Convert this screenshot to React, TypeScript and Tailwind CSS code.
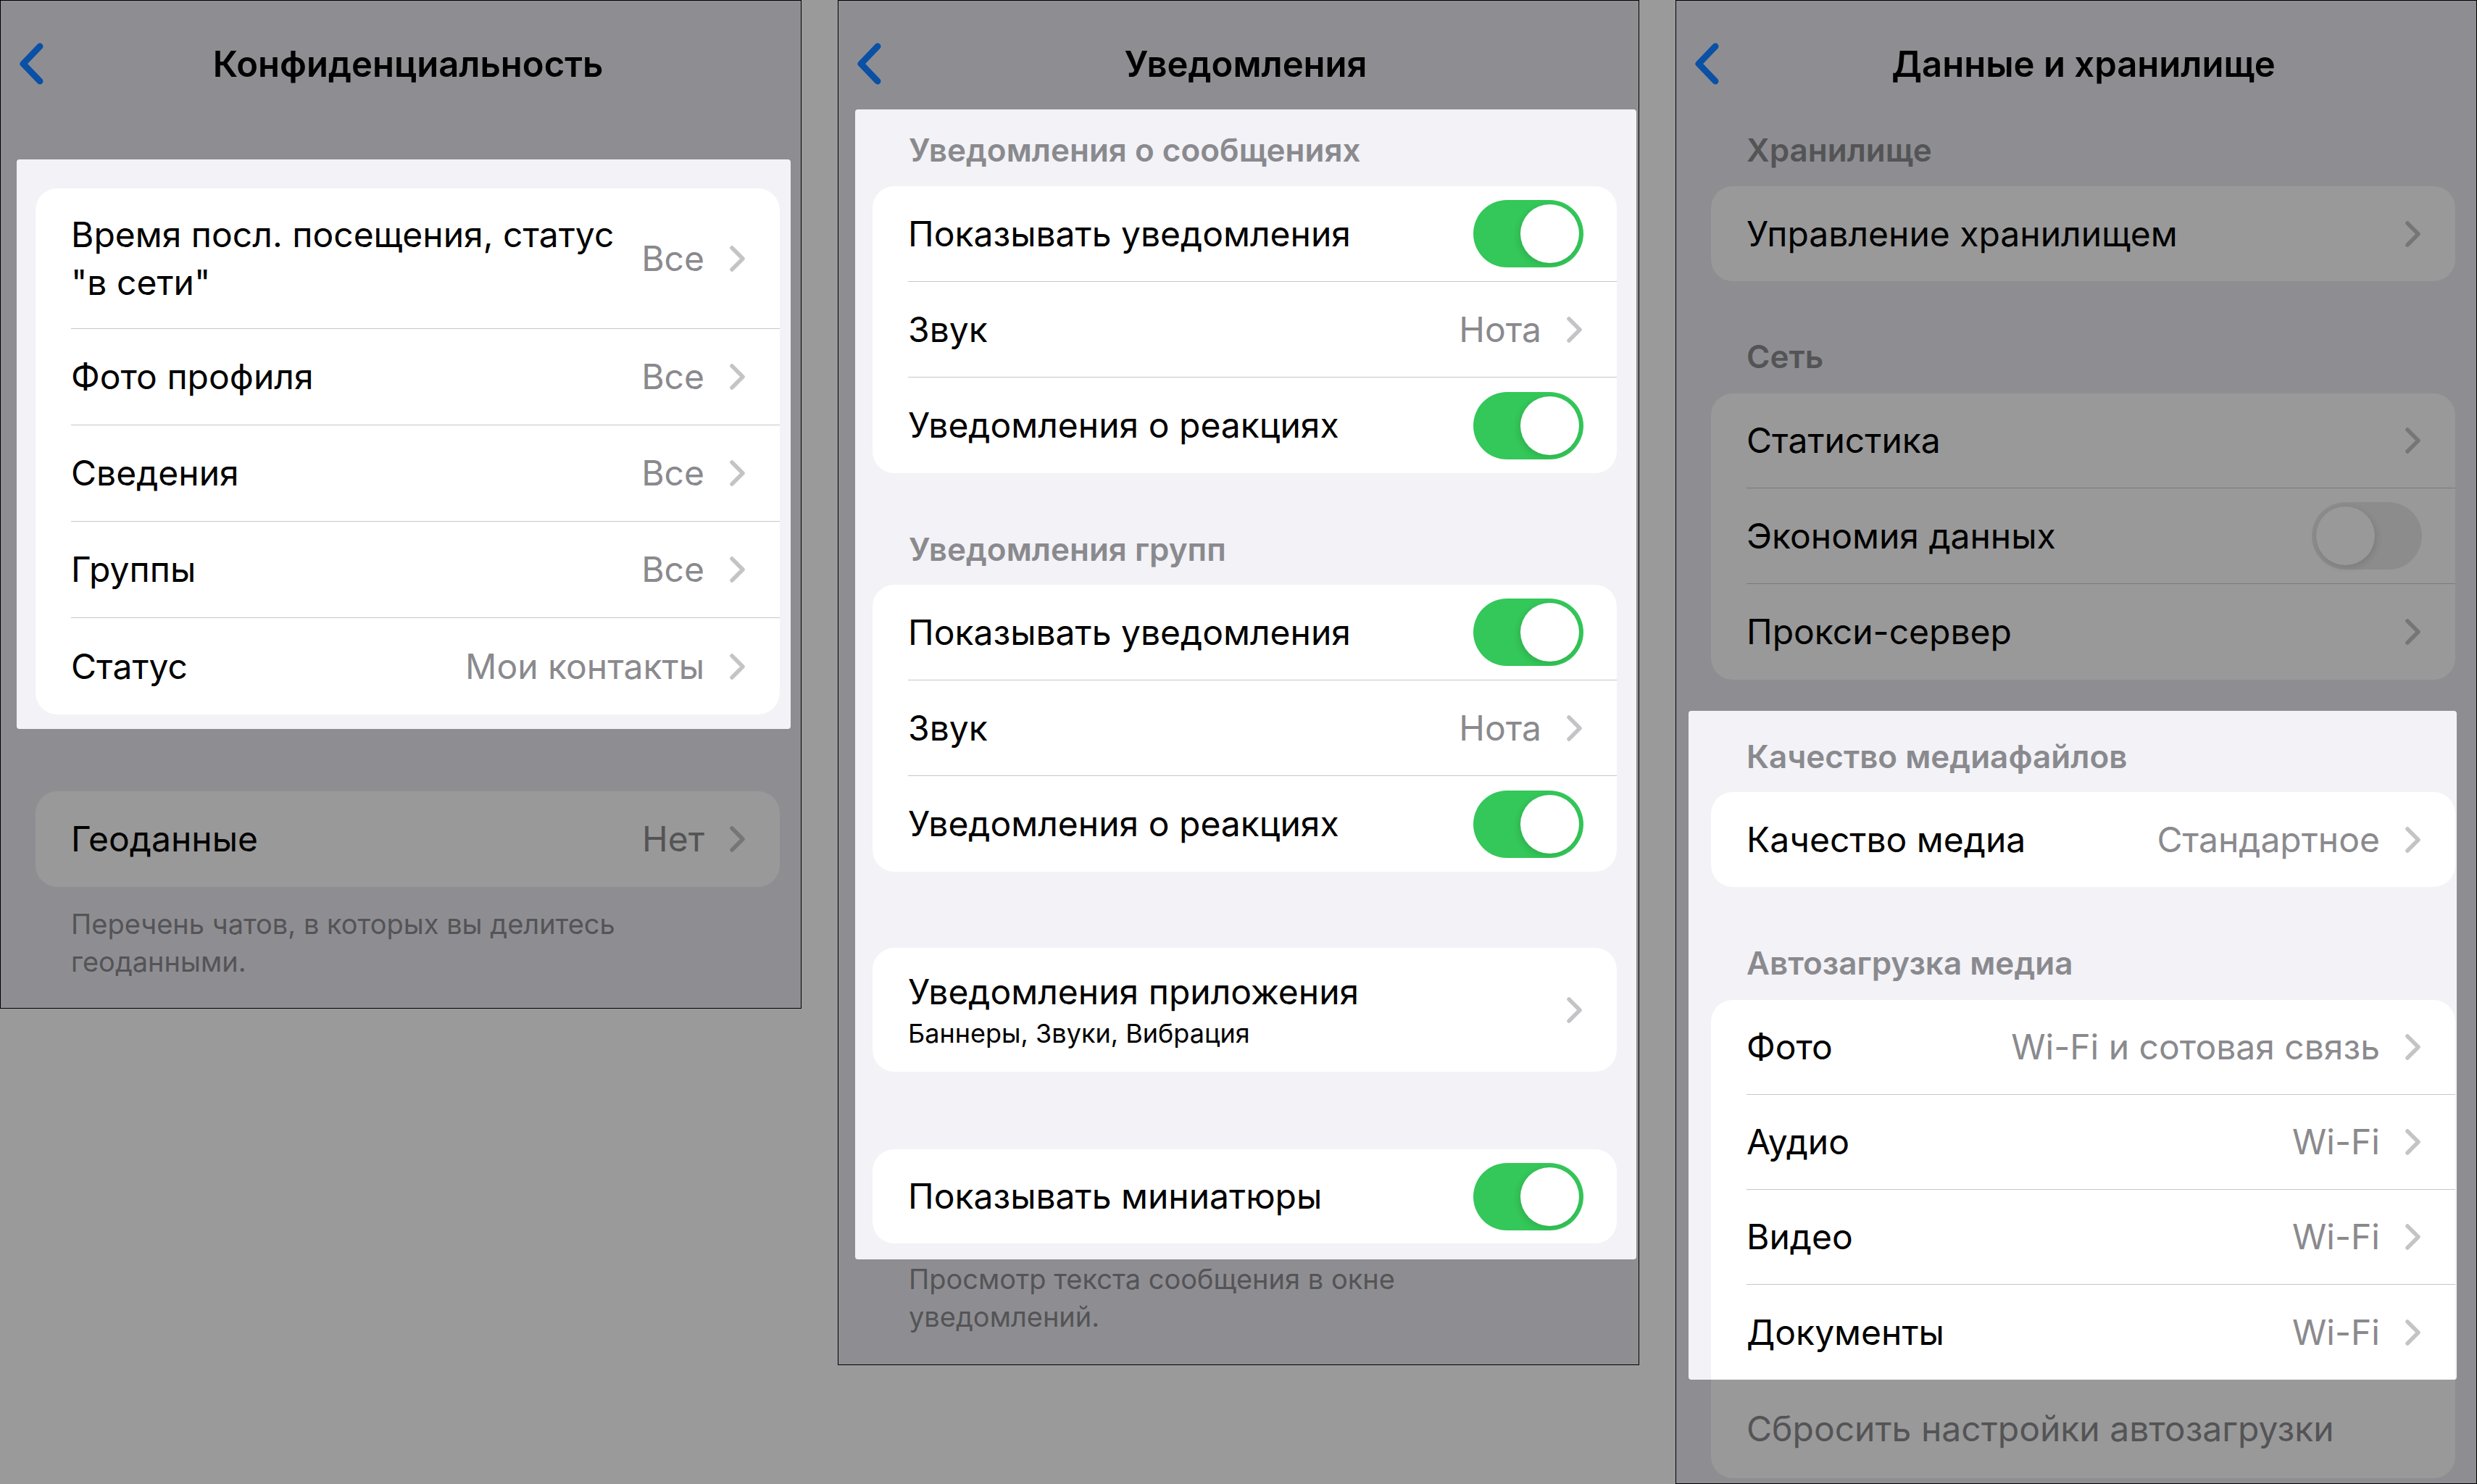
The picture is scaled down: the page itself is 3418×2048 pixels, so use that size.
import type { ReactNode } from 'react'

// three dimmed iOS settings screens, each with one highlighted block

const BackChevron = () => (
  <svg width="40" height="64" viewBox="0 0 40 64" className="shrink-0">
    <path d="M31 8 L8 32 L31 56" fill="none" stroke="#0a50a5" strokeWidth="9" strokeLinecap="round" strokeLinejoin="round" />
  </svg>
)

const Disclosure = ({ dim }: { dim?: boolean }) => (
  <svg width="24" height="38" viewBox="0 0 24 38" className="shrink-0 ml-[34px]">
    <path d="M4 4 L19 19 L4 34" fill="none" stroke={dim ? '#767678' : '#c4c4c7'} strokeWidth="5.5" strokeLinecap="round" strokeLinejoin="round" />
  </svg>
)

const Toggle = ({ on }: { on: boolean }) =>
  on ? (
    <div className="w-[152px] h-[93px] rounded-full bg-[#34c759] flex items-center justify-end p-[6px] shrink-0">
      <div className="w-[81px] h-[81px] rounded-full bg-white shadow-[-2px_3px_10px_rgba(0,0,0,0.12)]" />
    </div>
  ) : (
    <div className="w-[152px] h-[93px] rounded-full bg-[#8c8c8d] flex items-center justify-start p-[6px] shrink-0">
      <div className="w-[81px] h-[81px] rounded-full bg-[#999999] shadow-[2px_3px_10px_rgba(0,0,0,0.12)]" />
    </div>
  )

type RowProps = {
  label: ReactNode
  value?: string
  chevron?: boolean
  toggle?: 'on' | 'off'
  dim?: boolean
  last?: boolean
  h?: string
  labelClass?: string
}

const Row = ({ label, value, chevron, toggle, dim, last, h, labelClass }: RowProps) => (
  <div className={`flex pl-[49px] ${h ?? 'h-[132px]'}`}>
    <div
      className={`flex-1 flex items-center pr-[46px] ${
        last ? '' : dim ? 'border-b border-[#7a7a7c]' : 'border-b border-[#c6c6c8]'
      }`}
    >
      <div className={`flex-1 text-[48px] text-black ${labelClass ?? 'leading-[58px]'}`}>{label}</div>
      {value && (
        <span className={`text-[48px] leading-[58px] whitespace-nowrap ${dim ? 'text-[#545456]' : 'text-[#8a8a8e]'}`}>
          {value}
        </span>
      )}
      {chevron && <Disclosure dim={dim} />}
      {toggle && <Toggle on={toggle === 'on'} />}
    </div>
  </div>
)

const Card = ({ dim, className, children }: { dim?: boolean; className?: string; children: ReactNode }) => (
  <div className={`w-[1027px] overflow-hidden ${dim ? 'bg-[#999999]' : 'bg-white'} ${className ?? 'rounded-[30px]'}`}>
    {children}
  </div>
)

const Header = ({ dim, className, children }: { dim?: boolean; className?: string; children: ReactNode }) => (
  <div
    className={`h-[50px] text-[44px] leading-[50px] font-semibold whitespace-nowrap ${
      dim ? 'text-[#545456]' : 'text-[#8a8a8e]'
    } ${className ?? ''}`}
  >
    {children}
  </div>
)

const NavBar = ({ title }: { title: string }) => (
  <div className="grid grid-cols-[130px_1fr_110px] h-[150px] shrink-0">
    <div className="pl-[23px] pt-[55px]">
      <BackChevron />
    </div>
    <div className="pt-[58px] text-center text-[49px] leading-[60px] font-semibold text-black whitespace-nowrap">{title}</div>
    <div />
  </div>
)

const Footer = ({ className, children }: { className?: string; children: ReactNode }) => (
  <div className={`ml-[97px] text-[38px] leading-[52px] text-[#545456] ${className ?? ''}`}>{children}</div>
)

const PrivacyPanel = () => (
  <div className="w-[1106px] h-[1392px] shrink-0 border border-black bg-[#8e8e92] flex flex-col">
    <NavBar title="Конфиденциальность" />
    <div className="ml-[22px] mt-[69px] w-[1068px] rounded-[4px] bg-[#f2f2f7] pl-[26px] pt-[40px] pb-[20px]">
      <Card>
        <Row
          h="h-[194px]"
          labelClass="leading-[66px]"
          label={
            <>
              Время посл. посещения, статус
              <br />
              "в сети"
            </>
          }
          value="Все"
          chevron
        />
        <Row h="h-[133px]" label="Фото профиля" value="Все" chevron />
        <Row h="h-[133px]" label="Сведения" value="Все" chevron />
        <Row h="h-[133px]" label="Группы" value="Все" chevron />
        <Row h="h-[133px]" label="Статус" value="Мои контакты" chevron last />
      </Card>
    </div>
    <Card dim className="ml-[48px] mt-[86px] rounded-[30px]">
      <Row dim label="Геоданные" value="Нет" chevron last />
    </Card>
    <Footer className="mt-[25px]">
      Перечень чатов, в которых вы делитесь
      <br />
      геоданными.
    </Footer>
  </div>
)

const NotificationsPanel = () => (
  <div className="w-[1106px] h-[1884px] shrink-0 border border-black bg-[#8e8e92] flex flex-col">
    <NavBar title="Уведомления" />
    <div className="ml-[23px] w-[1078px] rounded-[4px] bg-[#f2f2f7] pl-[24px] pt-[31px] pb-[22px]">
      <Header className="pl-[50px]">Уведомления о сообщениях</Header>
      <Card className="mt-[25px] rounded-[30px]">
        <Row label="Показывать уведомления" toggle="on" />
        <Row label="Звук" value="Нота" chevron />
        <Row label="Уведомления о реакциях" toggle="on" last />
      </Card>
      <Header className="pl-[50px] mt-[80px]">Уведомления групп</Header>
      <Card className="mt-[24px] rounded-[30px]">
        <Row label="Показывать уведомления" toggle="on" />
        <Row label="Звук" value="Нота" chevron />
        <Row label="Уведомления о реакциях" toggle="on" last />
      </Card>
      <Card className="mt-[105px] rounded-[30px]">
        <div className="flex items-center h-[171px] pl-[49px] pr-[46px]">
          <div className="flex-1 flex flex-col">
            <div className="text-[48px] leading-[58px] text-black">Уведомления приложения</div>
            <div className="mt-[6px] text-[36px] leading-[44px] text-black">Баннеры, Звуки, Вибрация</div>
          </div>
          <Disclosure />
        </div>
      </Card>
      <Card className="mt-[107px] rounded-[30px]">
        <Row h="h-[130px]" label="Показывать миниатюры" toggle="on" last />
      </Card>
    </div>
    <Footer className="mt-[1px]">
      Просмотр текста сообщения в окне
      <br />
      уведомлений.
    </Footer>
  </div>
)

const StoragePanel = () => (
  <div className="w-[1106px] h-[2048px] shrink-0 border border-black bg-[#8e8e92] flex flex-col">
    <NavBar title="Данные и хранилище" />
    <Header dim className="ml-[48px] pl-[49px] mt-[31px]">
      Хранилище
    </Header>
    <Card dim className="ml-[48px] mt-[25px] rounded-[30px]">
      <Row dim h="h-[131px]" label="Управление хранилищем" chevron last />
    </Card>
    <Header dim className="ml-[48px] pl-[49px] mt-[79px]">
      Сеть
    </Header>
    <Card dim className="ml-[48px] mt-[26px] rounded-[30px]">
      <Row dim h="h-[131px]" label="Статистика" chevron />
      <Row dim label="Экономия данных" toggle="off" />
      <Row dim label="Прокси-сервер" chevron last />
    </Card>
    <div className="ml-[17px] mt-[43px] w-[1060px] rounded-[4px] bg-[#f2f2f7] pl-[31px] pt-[38px]">
      <Header className="pl-[49px]">Качество медиафайлов</Header>
      <Card className="mt-[24px] rounded-[30px]">
        <Row h="h-[131px]" label="Качество медиа" value="Стандартное" chevron last />
      </Card>
      <Header className="pl-[49px] mt-[80px]">Автозагрузка медиа</Header>
      <Card className="mt-[26px] rounded-t-[30px]">
        <Row h="h-[131px]" label="Фото" value="Wi-Fi и сотовая связь" chevron />
        <Row h="h-[131px]" label="Аудио" value="Wi-Fi" chevron />
        <Row h="h-[131px]" label="Видео" value="Wi-Fi" chevron />
        <Row h="h-[131px]" label="Документы" value="Wi-Fi" chevron last />
      </Card>
    </div>
    <Card dim className="ml-[48px] rounded-b-[30px]">
      <div className="flex items-center h-[136px] pl-[49px] text-[48px] leading-[58px] text-[#545456]">
        Сбросить настройки автозагрузки
      </div>
    </Card>
  </div>
)

export default function App() {
  return (
    <div className="flex items-start gap-[50px] w-[3418px] h-[2048px] overflow-hidden bg-[#9a9a9a] font-['Inter','Noto_Sans',sans-serif]">
      <PrivacyPanel />
      <NotificationsPanel />
      <StoragePanel />
    </div>
  )
}
